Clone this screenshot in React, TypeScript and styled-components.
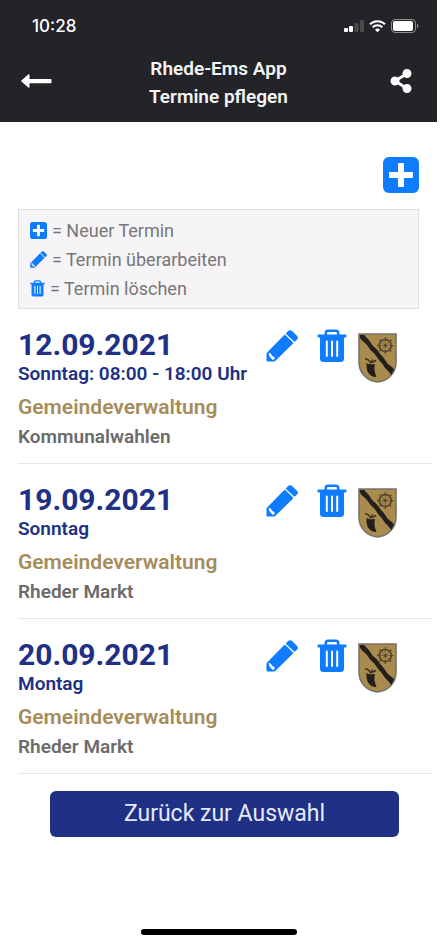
import React from "react";
import styled, { createGlobalStyle } from "styled-components";
import { FaShareAlt } from "react-icons/fa";

const GlobalStyle = createGlobalStyle`
  *, *::before, *::after { box-sizing: border-box; }
  body {
    margin: 0;
    background: #fff;
    color: #6b6b6b;
    font-family: Roboto, "Liberation Sans", sans-serif;
  }
  h1, h2, p, ul { margin: 0; padding: 0; }
  ul { list-style: none; }
  svg { display: block; flex: none; }
`;

const colors = {
  accent: "#0f7bff",
  navy: "#203084",
  gold: "#a68c5b",
  dark: "#232427",
};

const Page = styled.div`
  display: flex;
  flex-direction: column;
  min-height: 100vh;
  padding-right: 3px;
`;

const Header = styled.header`
  background: ${colors.dark};
  color: #fff;
  padding-bottom: 11px;
`;

const StatusBar = styled.div`
  display: flex;
  justify-content: space-between;
  align-items: center;
  height: 52px;
  padding: 0 18px 0 32px;
`;

const Clock = styled.time`
  font: 500 17px/20px Inter, sans-serif;
`;

const StatusIcons = styled.div`
  display: flex;
  align-items: center;
  gap: 5px;
`;

const TitleBar = styled.div`
  display: grid;
  grid-template-columns: 36px 1fr 36px;
  align-items: start;
  padding: 0 18px;
`;

const Title = styled.h1`
  padding-top: 3px;
  font-size: 19px;
  line-height: 28px;
  font-weight: 600;
  text-align: center;
  color: #f4f4f4;
`;

const IconButton = styled.button`
  display: flex;
  align-items: center;
  justify-content: center;
  padding: 0;
  border: 0;
  background: none;
  color: inherit;
  cursor: pointer;
`;

const HeaderButton = styled(IconButton)`
  height: 57px;
`;

const Main = styled.main`
  display: flex;
  flex-direction: column;
  padding: 35px 6px 0 18px;
`;

const Toolbar = styled.div`
  display: flex;
  justify-content: flex-end;
  margin: 0 12px 16px 0;
  color: ${colors.accent};
`;

const Legend = styled.ul`
  display: flex;
  flex-direction: column;
  margin-right: 12px;
  padding: 6px 11px 5px;
  border: 1px solid #dfdddf;
  background: #f6f4f6;
`;

const LegendRow = styled.li`
  display: flex;
  align-items: center;
  gap: 5px;
  font-size: 18px;
  line-height: 29px;
  color: #777;

  svg { color: ${colors.accent}; }
`;

const Entry = styled.li`
  display: flex;
  justify-content: space-between;
  align-items: flex-start;
  padding: 18px 34px 15px 0;
  border-bottom: 1px solid #e6e6e6;
`;

const EntryDate = styled.h2`
  font-size: 30px;
  line-height: 36px;
  font-weight: 700;
  color: ${colors.navy};
`;

const EntryTime = styled.p`
  font-size: 19px;
  line-height: 22px;
  font-weight: 600;
  color: ${colors.navy};
`;

const EntryPlace = styled.p`
  margin-top: 10px;
  font-size: 21px;
  line-height: 24px;
  font-weight: 600;
  color: ${colors.gold};
`;

const EntryName = styled.p`
  margin-top: 7px;
  font-size: 19px;
  line-height: 22px;
  font-weight: 600;
`;

const Actions = styled.div`
  display: flex;
  align-items: flex-start;
  padding-top: 2px;
  color: ${colors.accent};
`;

const EditButton = styled(IconButton)`
  height: 34px;
  margin-right: 19px;
`;

const DeleteButton = styled(IconButton)`
  height: 34px;
  margin-right: 11px;
`;

const CrestBox = styled.div`
  padding-top: 4px;
`;

const BackButton = styled.button`
  height: 46px;
  margin: 17px 32px 0;
  border: 0;
  border-radius: 6px;
  background: ${colors.navy};
  color: #e4eafb;
  font: 400 23px/28px Roboto, sans-serif;
  cursor: pointer;
`;

const HomeIndicator = styled.div`
  align-self: center;
  width: 156px;
  height: 6px;
  margin: auto 0 12px;
  border-radius: 3px;
  background: #000;
`;

const SignalIcon = () => (
  <svg width="20" height="13" viewBox="0 0 20 13" fill="#fff" aria-hidden="true">
    <rect x="0" y="8" width="4" height="4" rx="1" />
    <rect x="5" y="6" width="4" height="6" rx="1" />
    <rect x="10.5" y="3" width="4" height="9" rx="1" fill="#4b4c4e" />
    <rect x="16" y="0" width="4" height="12" rx="1" fill="#4b4c4e" />
  </svg>
);

const WifiIcon = () => (
  <svg width="17" height="13" viewBox="0 0 17 13" fill="none" stroke="#fff" strokeWidth="2.1" aria-hidden="true">
    <path d="M1 4.3a10.7 10.7 0 0 1 15 0" />
    <path d="M3.7 7.2a6.8 6.8 0 0 1 9.6 0" />
    <path d="M8.5 12.2 6 9.7a3.6 3.6 0 0 1 5 0z" fill="#fff" stroke="none" />
  </svg>
);

const BatteryIcon = () => (
  <svg width="28" height="14" viewBox="0 0 28 14" aria-hidden="true">
    <rect x=".5" y=".5" width="24" height="13" rx="3.5" fill="none" stroke="#8d8e90" />
    <rect x="2" y="2" width="20" height="10" rx="2" fill="#fff" />
    <path d="M26 4.8c2 .8 2 3.6 0 4.4z" fill="#8d8e90" />
  </svg>
);

const ArrowIcon = () => (
  <svg width="31" height="14" viewBox="0 0 31 14" fill="currentColor" aria-hidden="true">
    <path d="M7.2.4C8 0 8.5.3 8.5 1v3.9h21.2q.8 0 .8.7v2.9q0 .7-.8.7H8.5v3.9c0 .8-.6 1-1.2.5L.4 7.6q-.6-.6 0-1.2z" />
  </svg>
);

const PlusIcon = ({ size }: { size: number }) => (
  <svg width={size} height={size} viewBox="0 0 36 36" aria-hidden="true">
    <rect width="36" height="36" rx="6" fill="currentColor" />
    <rect x="15" y="6" width="6" height="24" rx="1" fill="#fff" />
    <rect x="6" y="15" width="24" height="6" rx="1" fill="#fff" />
  </svg>
);

const PencilIcon = ({ size }: { size: number }) => (
  <svg width={size} height={size} viewBox="0 0 32 32" fill="currentColor" aria-hidden="true">
    <path d="M.5 30.5V24q0-.8.6-1.400L18 5.200q.8-.8 1.600 0l7.200 7q.7.8 0 1.500L9.500 30.800q-.7.7-1.500.7H1.500q-1 0-1-1z" />
    <path d="m20.300 2.900 1.800-1.800q2-1.600 4 0l5 4.800q1.500 1.700 0 3.500l-1.800 1.800q-.8.700-1.500 0l-7.500-6.900q-.7-.7 0-1.400z" />
    <path d="M3.200 23.200 5 24.400l.6 1.900 2 .6.800 1.600-1.600.9-2.600-2.600z" fill="#fff" stroke="#fff" strokeWidth="1" strokeLinejoin="round" />
  </svg>
);

const TrashIcon = ({ size }: { size: number }) => (
  <svg width={Math.round((size * 30) / 34)} height={size} viewBox="0 0 30 34" aria-hidden="true">
    <path d="M8.8 7V4q0-2.3 2.3-2.3h7.8q2.3 0 2.3 2.3v3" fill="none" stroke="currentColor" strokeWidth="2.6" />
    <rect x=".5" y="5.6" width="29" height="3" rx="1" fill="currentColor" />
    <path d="M3 8h24v21.500q0 3.500-3.500 3.500h-17Q3 33 3 29.500z" fill="currentColor" />
    <path d="M9.800 12.500v14.500M15 12.500v14.500M20.200 12.500v14.500" stroke="#fff" strokeWidth="2" strokeLinecap="round" />
  </svg>
);

const Crest = () => (
  <svg width="39" height="50" viewBox="0 0 39 50" role="img" aria-label="Wappen">
    <path d="M1 1h37v28c0 11-8 19-18.500 20C9 48 1 40 1 29z" fill="#a88b4d" stroke="#77726a" strokeWidth="1.6" />
    <path d="M1.800 2h4.500c2 3 5 4.500 6.500 8 2 4 6 5 8 9 2 3.500 5 5 7 9 2 4 6 5 8.300 8.500l-3 5.500c-2-4-6-6-8-10-2-3.500-5-5-7-9-2-3.500-6-5.500-8-9.500C7 9 4 8.500 1.800 4.500z" fill="#241e1d" />
    <g fill="none" stroke="#50432d">
      <circle cx="27.300" cy="12.500" r="6" strokeWidth="1.700" />
      <path d="M27.300 5v15M19.800 12.500h15M22 7.200l10.600 10.600M32.600 7.200 22 17.800" strokeWidth=".5" />
      <circle cx="27.300" cy="12.500" r="1.200" strokeWidth="1" />
      <circle cx="27.300" cy="12.500" r="7.500" strokeWidth="1.400" strokeDasharray="1.500 4.390" strokeDashoffset=".75" />
    </g>
    <path d="M8.500 30c2 1.500 5 1.500 8.500 1-1.200 4-.5 8 1.500 13-4.500 0-7.500-2-9-5.500-1-2.500-1-5-1-8.500z" fill="#241e1d" />
    <path d="M7 26c3-.5 4.500 1.500 5.500 4M12.500 30.500l2-4M13.500 29.500l4.500-2" fill="none" stroke="#3d3021" strokeWidth="1.400" />
  </svg>
);

const entries = [
  { date: "12.09.2021", iso: "2021-09-12", time: "Sonntag: 08:00 - 18:00 Uhr", place: "Gemeindeverwaltung", name: "Kommunalwahlen" },
  { date: "19.09.2021", iso: "2021-09-19", time: "Sonntag", place: "Gemeindeverwaltung", name: "Rheder Markt" },
  { date: "20.09.2021", iso: "2021-09-20", time: "Montag", place: "Gemeindeverwaltung", name: "Rheder Markt" },
];

export default function App() {
  return (
    <>
      <GlobalStyle />
      <Page>
        <Header>
          <StatusBar>
            <Clock>10:28</Clock>
            <StatusIcons>
              <SignalIcon />
              <WifiIcon />
              <BatteryIcon />
            </StatusIcons>
          </StatusBar>
          <TitleBar>
            <HeaderButton type="button" aria-label="Zurück">
              <ArrowIcon />
            </HeaderButton>
            <Title>
              Rhede-Ems App
              <br />
              Termine pflegen
            </Title>
            <HeaderButton type="button" aria-label="Teilen">
              <FaShareAlt size={24} />
            </HeaderButton>
          </TitleBar>
        </Header>
        <Main>
          <Toolbar>
            <IconButton type="button" aria-label="Neuer Termin">
              <PlusIcon size={36} />
            </IconButton>
          </Toolbar>
          <Legend>
            <LegendRow><PlusIcon size={17} />= Neuer Termin</LegendRow>
            <LegendRow><PencilIcon size={17} />= Termin überarbeiten</LegendRow>
            <LegendRow><TrashIcon size={17} />= Termin löschen</LegendRow>
          </Legend>
          <ul>
            {entries.map((entry) => (
              <Entry key={entry.iso}>
                <div>
                  <EntryDate><time dateTime={entry.iso}>{entry.date}</time></EntryDate>
                  <EntryTime>{entry.time}</EntryTime>
                  <EntryPlace>{entry.place}</EntryPlace>
                  <EntryName>{entry.name}</EntryName>
                </div>
                <Actions>
                  <EditButton type="button" aria-label="Termin überarbeiten">
                    <PencilIcon size={32} />
                  </EditButton>
                  <DeleteButton type="button" aria-label="Termin löschen">
                    <TrashIcon size={34} />
                  </DeleteButton>
                  <CrestBox><Crest /></CrestBox>
                </Actions>
              </Entry>
            ))}
          </ul>
          <BackButton type="button">Zurück zur Auswahl</BackButton>
        </Main>
        <HomeIndicator />
      </Page>
    </>
  );
}
